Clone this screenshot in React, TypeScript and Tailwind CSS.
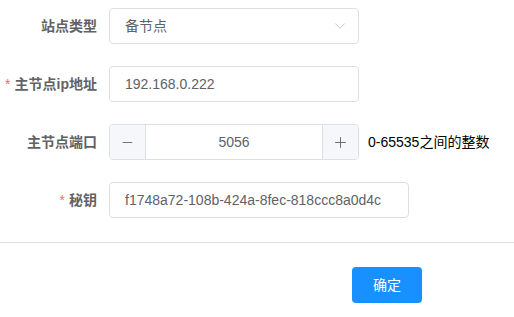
import { ChevronDown, Minus, Plus } from "lucide-react";

const font = { fontFamily: '"Liberation Sans", "Noto Sans CJK SC", sans-serif' };

function Label({ text, required }: { text: string; required?: boolean }) {
  return (
    <div className="w-[109px] shrink-0 pr-3 flex items-center justify-end text-sm font-bold text-[#606266]">
      {required && <span className="text-[#f56c6c] mr-1 font-normal">*</span>}
      {text}
    </div>
  );
}

export default function App() {
  return (
    <div style={font} className="w-[514px] h-[317px] bg-white pt-2 text-sm">
      <div className="flex h-9 mb-[22px]">
        <Label text="站点类型" />
        <div className="w-[250px] h-9 border border-[#dcdfe6] rounded flex items-center justify-between pl-[15px] pr-[9px] text-[#606266]">
          <span>备节点</span>
          <ChevronDown size={18} strokeWidth={1.2} className="text-[#c0c4cc]" />
        </div>
      </div>

      <div className="flex h-9 mb-[22px]">
        <Label text="主节点ip地址" required />
        <div className="w-[250px] h-9 border border-[#dcdfe6] rounded flex items-center pl-[15px] text-[#606266]">
          192.168.0.222
        </div>
      </div>

      <div className="flex h-9 mb-[22px] items-center">
        <Label text="主节点端口" />
        <div className="w-[250px] h-9 border border-[#dcdfe6] rounded flex overflow-hidden text-[#606266]">
          <div className="w-9 bg-[#f5f7fa] border-r border-[#dcdfe6] flex items-center justify-center">
            <Minus size={15} strokeWidth={1.4} />
          </div>
          <div className="flex-1 flex items-center justify-center">5056</div>
          <div className="w-9 bg-[#f5f7fa] border-l border-[#dcdfe6] flex items-center justify-center">
            <Plus size={17} strokeWidth={1.3} />
          </div>
        </div>
        <span className="ml-[9px] text-black">0-65535之间的整数</span>
      </div>

      <div className="flex h-9">
        <Label text="秘钥" required />
        <div className="w-[300px] h-9 border border-[#dcdfe6] rounded flex items-center pl-[15px] text-[#606266]">
          f1748a72-108b-424a-8fec-818ccc8a0d4c
        </div>
      </div>

      <div className="mt-6 border-t border-[#dcdfe6]" />

      <div className="pt-6 pl-[352px]">
        <button className="w-[70px] h-9 rounded bg-[#1890ff] text-white text-sm">确定</button>
      </div>
    </div>
  );
}
